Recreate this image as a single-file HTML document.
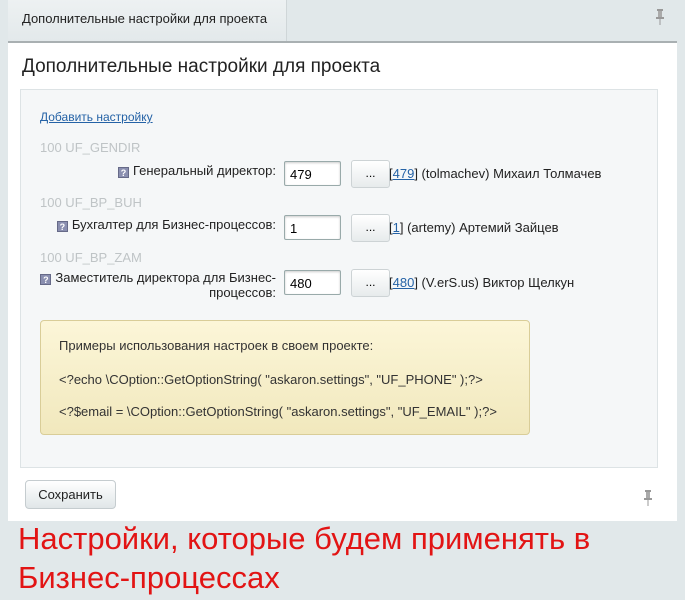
<!DOCTYPE html>
<html><head><meta charset="utf-8"><style>
body{margin:0;width:685px;height:600px;background:#e1e8ea;font-family:"Liberation Sans",Arial,sans-serif;position:relative;overflow:hidden}
.a{position:absolute}
.tab{left:8px;top:0;width:279px;height:41px;background:linear-gradient(#edf1f2,#e3e9eb);border-right:1px solid #cfd6d8;font-size:13px;color:#222;line-height:38px;padding-left:14px;box-sizing:border-box}
.panel{left:8px;top:41px;width:669px;height:480px;background:#fff;border-top:2px solid #a9b0b2;box-sizing:border-box}
.h{left:22px;top:56px;font-size:19px;color:#222}
.inner{left:20px;top:89px;width:638px;height:379px;background:#f5f7f8;border:1px solid #dde3e5;box-sizing:border-box}
a{color:#2462a6;text-decoration:underline}
.g{font-size:13px;color:#bfc4c6}
.lbl{font-size:13px;color:#222;text-align:right;width:246px;line-height:15px}
.q{display:inline-block;width:11px;height:11px;background:#8a8fb0;border:1px solid #666a88;vertical-align:-1px;margin-right:4px;color:#fff;font-size:9px;line-height:11px;text-align:center;font-weight:bold;box-sizing:border-box}
.in{width:57px;height:25px;border:1px solid #9aa;border-radius:2px;background:#fff;font-size:13px;line-height:25px;padding-left:5px;box-sizing:border-box;box-shadow:inset 0 1px 2px #ccc}
.btn{width:39px;height:28px;border:1px solid #cdd3d5;border-radius:3px;background:linear-gradient(#fff,#e7ebec);font-size:12px;text-align:center;line-height:24px;box-sizing:border-box}
.r{font-size:13px;color:#222}
.y{left:40px;top:320px;width:490px;height:115px;background:linear-gradient(#fcf6d8,#f1e8bd);border:1px solid #d9cd98;border-radius:4px;box-sizing:border-box;font-size:13px;color:#333}
.save{left:25px;top:480px;width:91px;height:29px;border:1px solid #c5cccf;border-radius:4px;background:linear-gradient(#fff,#e0e6e8);font-size:13px;text-align:center;line-height:27px;box-sizing:border-box;color:#222}
.red{left:18px;top:519px;font-size:31px;color:#e21414;line-height:39px}
</style></head><body>
<div class="a tab">Дополнительные настройки для проекта</div>
<svg class="a" style="left:655px;top:9px" width="10" height="16"><rect x="2" y="0" width="6" height="2" fill="#999"/><rect x="3" y="2" width="4" height="6" fill="#aaa"/><rect x="1" y="8" width="8" height="2" fill="#999"/><rect x="4.5" y="10" width="1" height="6" fill="#999"/></svg>
<div class="a panel"></div>
<div class="a h">Дополнительные настройки для проекта</div>
<div class="a inner"></div>
<div class="a" style="left:40px;top:110px;font-size:12px"><a>Добавить настройку</a></div>

<div class="a g" style="left:40px;top:140px">100 UF_GENDIR</div>
<div class="a lbl" style="left:30px;top:163px"><span class="q">?</span>Генеральный директор:</div>
<div class="a in" style="left:284px;top:161px">479</div>
<div class="a btn" style="left:351px;top:160px">...</div>
<div class="a r" style="left:389px;top:166px">[<a>479</a>] (tolmachev) Михаил Толмачев</div>

<div class="a g" style="left:40px;top:195px">100 UF_BP_BUH</div>
<div class="a lbl" style="left:30px;top:217px"><span class="q">?</span>Бухгалтер для Бизнес-процессов:</div>
<div class="a in" style="left:284px;top:215px">1</div>
<div class="a btn" style="left:351px;top:214px">...</div>
<div class="a r" style="left:389px;top:220px">[<a>1</a>] (artemy) Артемий Зайцев</div>

<div class="a g" style="left:40px;top:250px">100 UF_BP_ZAM</div>
<div class="a lbl" style="left:30px;top:270px"><span class="q">?</span>Заместитель директора для Бизнес-<br>процессов:</div>
<div class="a in" style="left:284px;top:270px">480</div>
<div class="a btn" style="left:351px;top:269px">...</div>
<div class="a r" style="left:389px;top:275px">[<a>480</a>] (V.erS.us) Виктор Щелкун</div>

<div class="a y">
<div class="a" style="left:18px;top:17px">Примеры использования настроек в своем проекте:</div>
<div class="a" style="left:18px;top:51px">&lt;?echo \COption::GetOptionString( "askaron.settings", "UF_PHONE" );?&gt;</div>
<div class="a" style="left:18px;top:83px">&lt;?$email = \COption::GetOptionString( "askaron.settings", "UF_EMAIL" );?&gt;</div>
</div>
<div class="a save">Сохранить</div>
<svg class="a" style="left:643px;top:490px" width="10" height="16"><rect x="2" y="0" width="6" height="2" fill="#999"/><rect x="3" y="2" width="4" height="6" fill="#aaa"/><rect x="1" y="8" width="8" height="2" fill="#999"/><rect x="4.5" y="10" width="1" height="6" fill="#999"/></svg>
<div class="a red">Настройки, которые будем применять в<br>Бизнес-процессах</div>
</body></html>
